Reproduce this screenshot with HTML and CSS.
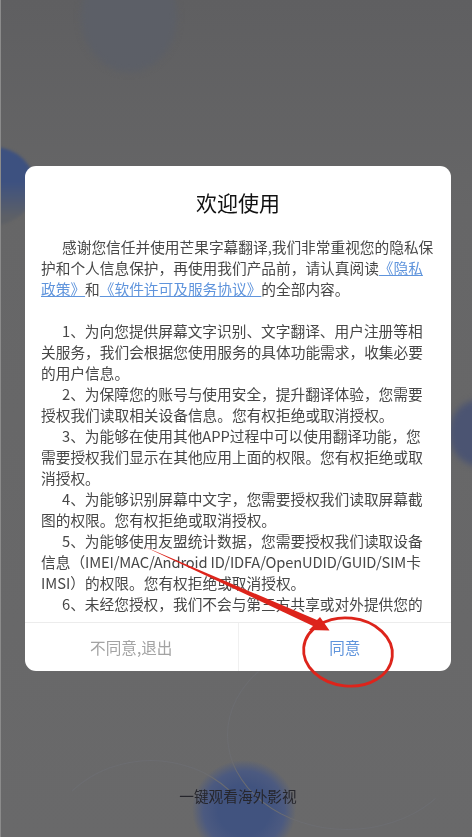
FILE: index.html
```html
<!DOCTYPE html>
<html lang="zh">
<head>
<meta charset="utf-8">
<title>欢迎使用</title>
<link rel="stylesheet" href="styles.css">
</head>
<body>
<div class="screen">
  <div class="blob blob-top"></div>
  <div class="blob blob-left"></div>
  <div class="blob blob-right"></div>
  <div class="blob blob-bottom"></div>
  <div class="curve curve-a"></div>
  <div class="curve curve-b"></div>
  <div class="dialog">
    <h1 class="title">欢迎使用</h1>
    <div class="content">
      <p class="para">感谢您信任并使用芒果字幕翻译,我们非常重视您的隐私保<br>护和个人信息保护，再使用我们产品前，请认真阅读<a class="link">《隐私<br>政策》</a>和<a class="link">《软件许可及服务协议》</a>的全部内容。</p>
      <p class="para gap">1、为向您提供屏幕文字识别、文字翻译、用户注册等相<br>关服务，我们会根据您使用服务的具体功能需求，收集必要<br>的用户信息。</p>
      <p class="para">2、为保障您的账号与使用安全，提升翻译体验，您需要<br>授权我们读取相关设备信息。您有权拒绝或取消授权。</p>
      <p class="para">3、为能够在使用其他APP过程中可以使用翻译功能，您<br>需要授权我们显示在其他应用上面的权限。您有权拒绝或取<br>消授权。</p>
      <p class="para">4、为能够识别屏幕中文字，您需要授权我们读取屏幕截<br>图的权限。您有权拒绝或取消授权。</p>
      <p class="para">5、为能够使用友盟统计数据，您需要授权我们读取设备<br>信息（<span class="ids">IMEI/MAC/Android ID/IDFA/OpenUDID/GUID/SIM</span>卡<br>IMSI）的权限。您有权拒绝或取消授权。</p>
      <p class="para">6、未经您授权，我们不会与第三方共享或对外提供您的</p>
    </div>
    <div class="actions">
      <div class="action decline">不同意,退出</div>
      <div class="action accept">同意</div>
    </div>
  </div>
  <div class="slogan">一键观看海外影视</div>
  <svg class="markup" viewBox="0 0 472 837" aria-hidden="true">
    <polygon class="red" points="143,546 317,620 320,617 329.5,630.5 309,630 313,626"/>
    <ellipse class="ring" cx="348" cy="652" rx="44.5" ry="34" transform="rotate(6 348 652)"/>
  </svg>
</div>
</body>
</html>
```
FILE: styles.css
```css
* { box-sizing: border-box; }
html, body { margin: 0; padding: 0; }
body { width: 472px; height: 837px; overflow: hidden; background: #686868; }
.screen {
  position: relative;
  width: 472px;
  height: 837px;
  overflow: hidden;
  display: flex;
  flex-direction: column;
  align-items: flex-start;
  padding: 166px 0 0 24px;
  background: linear-gradient(#5f5f61, #666667 25%, #69696a);
  border-left: 1px solid #8b8b8b;
  font-family: "Noto Sans CJK SC", "Noto Sans", sans-serif;
  filter: blur(0.4px);
}
.blob { position: absolute; border-radius: 50%; }
.blob-top { left: 80px; top: -40px; width: 96px; height: 112px; background: #5c5f67; filter: blur(3px); }
.blob-left { left: -50px; top: 147px; width: 84px; height: 78px; background: linear-gradient(#3d5180 45%, #5d6066 90%); filter: blur(1.5px); }
.blob-right { left: 448px; top: 400px; width: 60px; height: 66px; background: #4b5472; filter: blur(3px); }
.blob-bottom { left: 191px; top: 760px; width: 104px; height: 100px; background: radial-gradient(closest-side, #41537f 50%, #4c5a80 78%, #69696a00); }
.curve { position: absolute; border-radius: 50%; border: 1px solid transparent; }
.curve-a { left: 226px; top: 640px; width: 240px; height: 190px; border-bottom-color: #6c6d71; border-left-color: #6c6d71; }
.curve-b { left: 40px; top: 760px; width: 220px; height: 200px; border-top-color: #6c6d71; }
.dialog {
  position: relative;
  width: 426px;
  height: 505px;
  background: #fff;
  border-radius: 11px;
  display: flex;
  flex-direction: column;
  overflow: hidden;
}
.title {
  margin: 0;
  height: 70px;
  padding-top: 20px;
  font-size: 21px;
  line-height: 32px;
  font-weight: 400;
  text-align: center;
  color: #111;
}
.content {
  flex: 1;
  min-height: 0;
  overflow: hidden;
  padding: 0 16px;
  font-size: 14.7px;
  line-height: 21px;
  color: #474747;
  white-space: nowrap;
}
.para { margin: 0; text-indent: 21px; }
.gap { margin-top: 21px; }
.ids { letter-spacing: -0.15px; }
.link { color: #5f94dc; text-decoration: underline; }
.actions { display: flex; height: 49px; border-top: 1px solid #ececec; }
.action { flex: 1; display: flex; align-items: center; justify-content: center; font-size: 15.6px; }
.decline { color: #a3a3a3; border-right: 1px solid #f0f0f0; }
.accept { color: #5f94dc; }
.slogan {
  position: relative;
  margin: 114px 0 0 0;
  width: 426px;
  text-align: center;
  font-size: 14.7px;
  line-height: 22px;
  color: #26262c;
}
.markup { position: absolute; left: -1px; top: 0; width: 472px; height: 837px; }
.red { fill: #dd241b; }
.ring { fill: none; stroke: #dd241b; stroke-width: 2.8; }
```
